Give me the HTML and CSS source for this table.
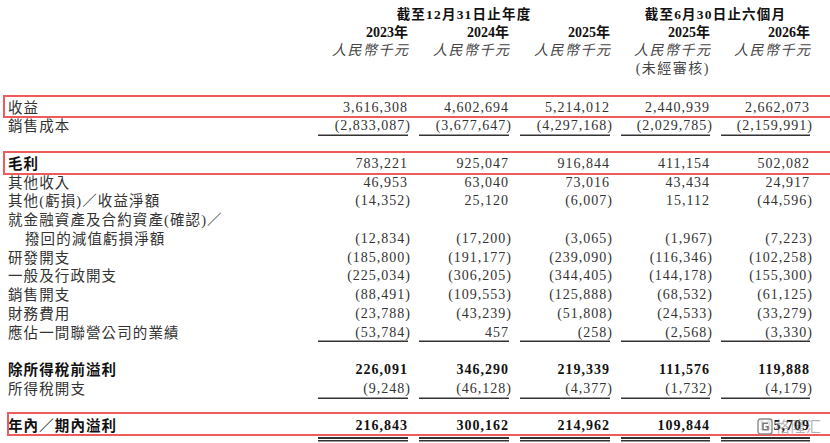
FILE: index.html
```html
<!DOCTYPE html>
<html lang="zh-Hant">
<head>
<meta charset="utf-8">
<title>綜合損益表</title>
<link rel="stylesheet" href="styles.css">
</head>
<body>
<div class="sheet">
  <div class="head">
    <div class="hrow">
      <div></div>
      <div class="period p3">截至12月31日止年度</div>
      <div class="period p2">截至6月30日止六個月</div>
    </div>
    <div class="hrow">
      <div></div>
      <div class="yr">2023年</div>
      <div class="yr">2024年</div>
      <div class="yr">2025年</div>
      <div class="yr">2025年</div>
      <div class="yr">2026年</div>
    </div>
    <div class="hrow">
      <div></div>
      <div class="unit">人民幣千元</div>
      <div class="unit">人民幣千元</div>
      <div class="unit">人民幣千元</div>
      <div class="unit">人民幣千元</div>
      <div class="unit">人民幣千元</div>
    </div>
    <div class="hrow">
      <div></div><div></div><div></div><div></div>
      <div class="audit">(未經審核)</div>
      <div></div>
    </div>
  </div>

  <div class="body">
    <div class="row hl">
      <div class="lbl">收益</div>
      <div class="c"><span>3,616,308</span></div>
      <div class="c"><span>4,602,694</span></div>
      <div class="c"><span>5,214,012</span></div>
      <div class="c"><span>2,440,939</span></div>
      <div class="c"><span>2,662,073</span></div>
    </div>
    <div class="row u">
      <div class="lbl">銷售成本</div>
      <div class="c"><span class="neg">(2,833,087)</span></div>
      <div class="c"><span class="neg">(3,677,647)</span></div>
      <div class="c"><span class="neg">(4,297,168)</span></div>
      <div class="c"><span class="neg">(2,029,785)</span></div>
      <div class="c"><span class="neg">(2,159,991)</span></div>
    </div>
    <div class="row"></div>
    <div class="row hl">
      <div class="lbl b">毛利</div>
      <div class="c"><span>783,221</span></div>
      <div class="c"><span>925,047</span></div>
      <div class="c"><span>916,844</span></div>
      <div class="c"><span>411,154</span></div>
      <div class="c"><span>502,082</span></div>
    </div>
    <div class="row">
      <div class="lbl">其他收入</div>
      <div class="c"><span>46,953</span></div>
      <div class="c"><span>63,040</span></div>
      <div class="c"><span>73,016</span></div>
      <div class="c"><span>43,434</span></div>
      <div class="c"><span>24,917</span></div>
    </div>
    <div class="row">
      <div class="lbl">其他(虧損)／收益淨額</div>
      <div class="c"><span class="neg">(14,352)</span></div>
      <div class="c"><span>25,120</span></div>
      <div class="c"><span class="neg">(6,007)</span></div>
      <div class="c"><span>15,112</span></div>
      <div class="c"><span class="neg">(44,596)</span></div>
    </div>
    <div class="row">
      <div class="lbl">就金融資產及合約資產(確認)／</div>
    </div>
    <div class="row">
      <div class="lbl ind">撥回的減值虧損淨額</div>
      <div class="c"><span class="neg">(12,834)</span></div>
      <div class="c"><span class="neg">(17,200)</span></div>
      <div class="c"><span class="neg">(3,065)</span></div>
      <div class="c"><span class="neg">(1,967)</span></div>
      <div class="c"><span class="neg">(7,223)</span></div>
    </div>
    <div class="row">
      <div class="lbl">研發開支</div>
      <div class="c"><span class="neg">(185,800)</span></div>
      <div class="c"><span class="neg">(191,177)</span></div>
      <div class="c"><span class="neg">(239,090)</span></div>
      <div class="c"><span class="neg">(116,346)</span></div>
      <div class="c"><span class="neg">(102,258)</span></div>
    </div>
    <div class="row">
      <div class="lbl">一般及行政開支</div>
      <div class="c"><span class="neg">(225,034)</span></div>
      <div class="c"><span class="neg">(306,205)</span></div>
      <div class="c"><span class="neg">(344,405)</span></div>
      <div class="c"><span class="neg">(144,178)</span></div>
      <div class="c"><span class="neg">(155,300)</span></div>
    </div>
    <div class="row">
      <div class="lbl">銷售開支</div>
      <div class="c"><span class="neg">(88,491)</span></div>
      <div class="c"><span class="neg">(109,553)</span></div>
      <div class="c"><span class="neg">(125,888)</span></div>
      <div class="c"><span class="neg">(68,532)</span></div>
      <div class="c"><span class="neg">(61,125)</span></div>
    </div>
    <div class="row">
      <div class="lbl">財務費用</div>
      <div class="c"><span class="neg">(23,788)</span></div>
      <div class="c"><span class="neg">(43,239)</span></div>
      <div class="c"><span class="neg">(51,808)</span></div>
      <div class="c"><span class="neg">(24,533)</span></div>
      <div class="c"><span class="neg">(33,279)</span></div>
    </div>
    <div class="row u">
      <div class="lbl">應佔一間聯營公司的業績</div>
      <div class="c"><span class="neg">(53,784)</span></div>
      <div class="c"><span>457</span></div>
      <div class="c"><span class="neg">(258)</span></div>
      <div class="c"><span class="neg">(2,568)</span></div>
      <div class="c"><span class="neg">(3,330)</span></div>
    </div>
    <div class="row"></div>
    <div class="row bold">
      <div class="lbl b">除所得稅前溢利</div>
      <div class="c"><span>226,091</span></div>
      <div class="c"><span>346,290</span></div>
      <div class="c"><span>219,339</span></div>
      <div class="c"><span>111,576</span></div>
      <div class="c"><span>119,888</span></div>
    </div>
    <div class="row u">
      <div class="lbl">所得稅開支</div>
      <div class="c"><span class="neg">(9,248)</span></div>
      <div class="c"><span class="neg">(46,128)</span></div>
      <div class="c"><span class="neg">(4,377)</span></div>
      <div class="c"><span class="neg">(1,732)</span></div>
      <div class="c"><span class="neg">(4,179)</span></div>
    </div>
    <div class="row"></div>
    <div class="row bold uu hl hl-last">
      <div class="lbl b">年內／期內溢利</div>
      <div class="c"><span>216,843</span></div>
      <div class="c"><span>300,162</span></div>
      <div class="c"><span>214,962</span></div>
      <div class="c"><span>109,844</span></div>
      <div class="c"><span>115,709</span></div>
    </div>
  </div>

  <div class="mark">
    <svg class="mark-logo" width="16" height="17" viewBox="0 0 16 17">
      <rect x="1" y="1" width="14" height="15" rx="2.5" fill="#fff" fill-opacity="0.85" stroke="#8a8a8a" stroke-width="1.4"/>
      <path d="M11 5.2 H6 V11.8 H11 V8.8 H8.6" fill="none" stroke="#7a7a7a" stroke-width="1.6"/>
    </svg>
    <span class="mark-text">格隆汇</span>
  </div>
</div>
</body>
</html>
```

FILE: styles.css
```css
* {
  box-sizing: border-box;
}

html,
body {
  margin: 0;
  background: #ffffff;
}

body {
  font-family: "Liberation Serif", "Noto Sans CJK TC", serif;
  color: #333333;
}

.sheet {
  position: relative;
  width: 830px;
  height: 443px;
  padding: 6px 0 0 8px;
  overflow: hidden;
}

.hrow,
.row {
  display: grid;
  grid-template-columns: 299px 101px 101px 101px 100px 100px;
}

/* ---------- header ---------- */
.head {
  margin-bottom: 20.6px;
}

.hrow {
  height: 18px;
  line-height: 18px;
}

.period {
  grid-column: span 3;
  margin-left: 11px;
  text-align: center;
  font-size: 13.5px;
  font-weight: bold;
  letter-spacing: 1.2px;
  color: #111111;
  white-space: nowrap;
}

.period.p2 {
  grid-column: span 2;
}

.yr {
  text-align: right;
  font-size: 14px;
  font-weight: bold;
  color: #111111;
}

.unit,
.audit {
  text-align: right;
  font-size: 14px;
  font-style: italic;
  letter-spacing: 1.5px;
  margin-right: -1.5px;
  color: #444444;
  white-space: nowrap;
}

.audit {
  font-style: normal;
  margin-right: 0;
}

/* ---------- body rows ---------- */
.row {
  position: relative;
  height: 18.75px;
  line-height: 18.75px;
  font-size: 14px;
}

.lbl {
  font-size: 14.5px;
  letter-spacing: 1.1px;
  white-space: nowrap;
  color: #333333;
}

.lbl.ind {
  padding-left: 17px;
}

.lbl.b {
  font-weight: bold;
  color: #111111;
}

.c {
  margin-left: 11px;
  text-align: right;
  letter-spacing: 1px;
  white-space: nowrap;
}

.c .neg {
  margin-right: -3px;
}

.row.bold .c {
  font-weight: bold;
  color: #111111;
}

.row.u .c {
  box-shadow: inset 0 -1.5px 0 #333333;
}

.row.uu .c {
  box-shadow:
    0 1px 0 #ffffff,
    0 3px 0 #333333,
    0 4px 0 #ffffff,
    0 5.5px 0 #333333;
}

/* red highlight frames laid over a row */
.row.hl::after {
  content: "";
  position: absolute;
  top: -4px;
  bottom: -1px;
  left: -5px;
  right: -10px;
  border: 2px solid #ef5a5a;
  pointer-events: none;
}

.row.hl-last::after {
  top: -5px;
  bottom: 0;
  left: -1px;
  right: -8px;
}

/* watermark */
.mark {
  position: absolute;
  left: 757px;
  top: 417px;
  display: flex;
  align-items: center;
  gap: 2px;
}

.mark-logo {
  display: block;
}

.mark-text {
  font-family: "Noto Sans CJK SC", sans-serif;
  font-size: 15px;
  line-height: 18px;
  color: rgba(110, 110, 110, 0.55);
  letter-spacing: 0.5px;
}
```
